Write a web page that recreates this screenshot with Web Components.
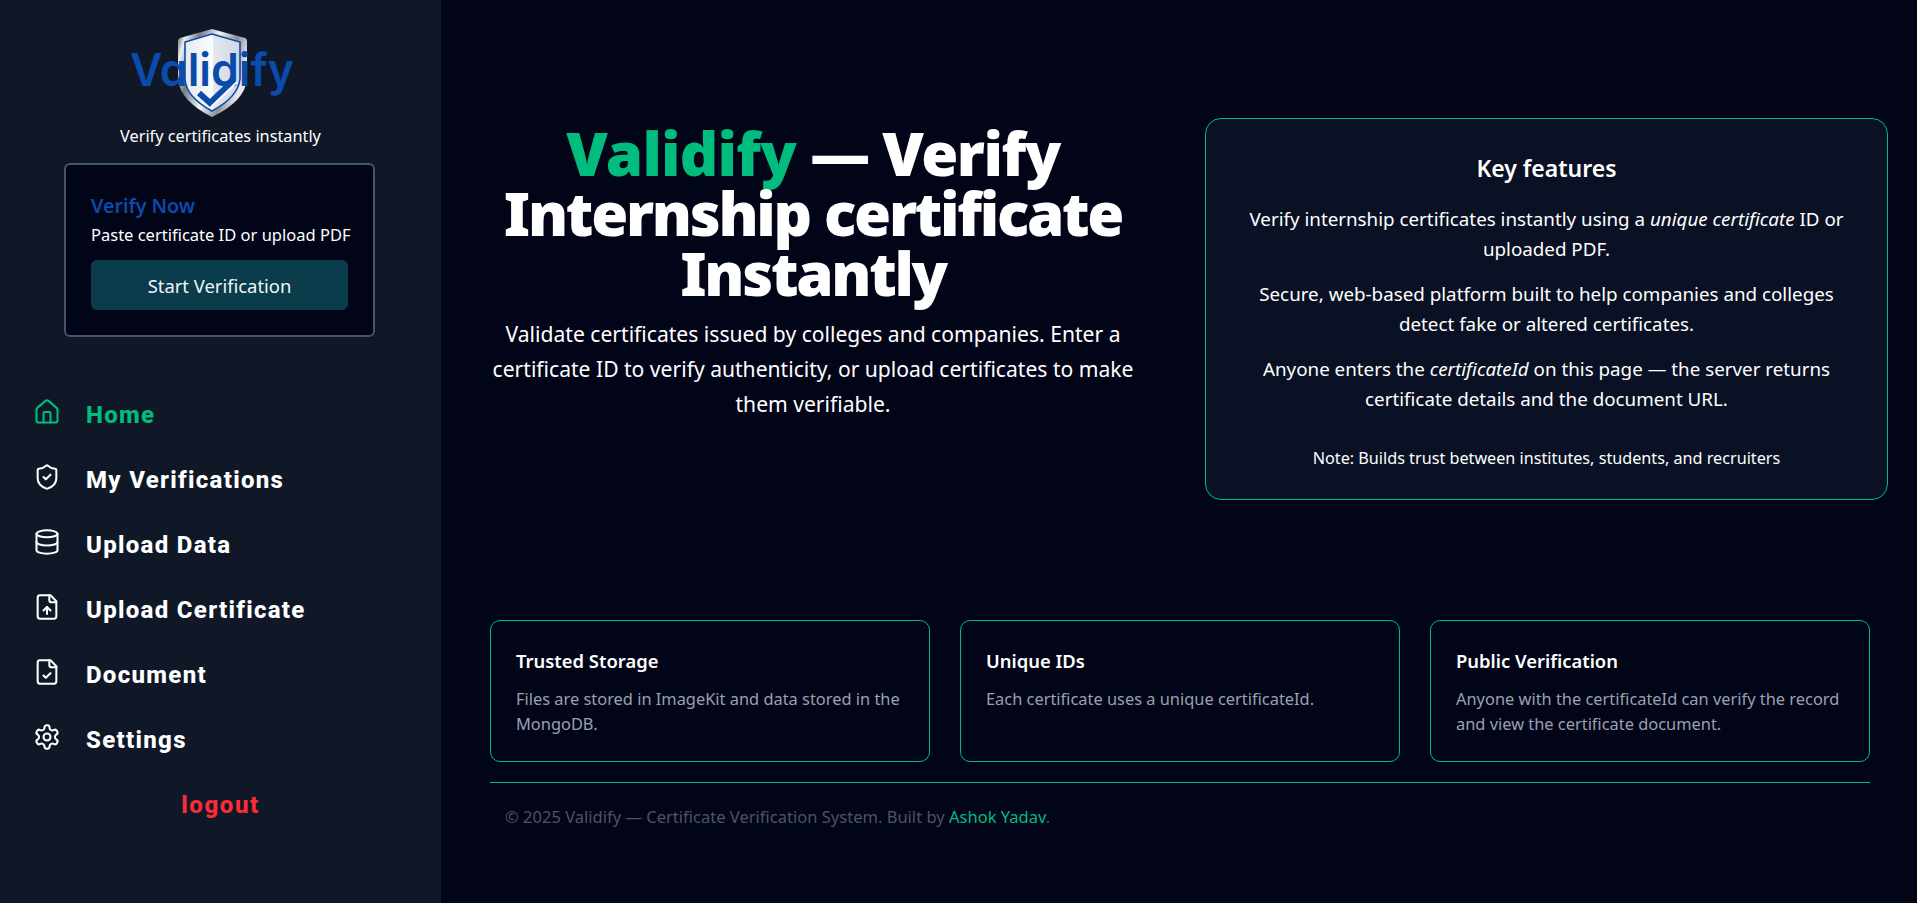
<!DOCTYPE html>
<html lang="en">
<head>
<meta charset="utf-8">
<title>Validify</title>
<style>
    html, body { margin: 0; padding: 0; height: 100%; }
    body { background: #020418; color: #fff; font-family: "Noto Sans", "Open Sans", sans-serif; }
</style>
</head>
<body>
<validify-app>
    <validify-sidebar slot="side">
        <nav-item label="Home" icon="home" active></nav-item>
        <nav-item label="My Verifications" icon="shield"></nav-item>
        <nav-item label="Upload Data" icon="database"></nav-item>
        <nav-item label="Upload Certificate" icon="fileup"></nav-item>
        <nav-item label="Document" icon="filecheck"></nav-item>
        <nav-item label="Settings" icon="settings"></nav-item>
    </validify-sidebar>
    <hero-section>
        <feature-panel slot="panel" heading="Key features">
            <p>Verify internship certificates instantly using a <em>unique certificate</em> ID or uploaded PDF.</p>
            <p>Secure, web-based platform built to help companies and colleges detect fake or altered certificates.</p>
            <p>Anyone enters the <em>certificateId</em> on this page — the server returns certificate details and the document URL.</p>
            <p style="margin-top:29px;font-size:16.2px;margin-bottom:0;">Note: Builds trust between institutes, students, and recruiters</p>
        </feature-panel>
    </hero-section>
    <info-row>
        <info-card heading="Trusted Storage">Files are stored in ImageKit and data stored in the MongoDB.</info-card>
        <info-card heading="Unique IDs">Each certificate uses a unique certificateId.</info-card>
        <info-card heading="Public Verification">Anyone with the certificateId can verify the record and view the certificate document.</info-card>
    </info-row>
    <site-footer></site-footer>
</validify-app>

<script>
const ICONS = {
    home: '<path d="M15 21v-8a1 1 0 0 0-1-1h-4a1 1 0 0 0-1 1v8"/><path d="M3 10a2 2 0 0 1 .709-1.528l7-5.999a2 2 0 0 1 2.582 0l7 5.999A2 2 0 0 1 21 10v9a2 2 0 0 1-2 2H5a2 2 0 0 1-2-2z"/>',
    shield: '<path d="M20 13c0 5-3.5 7.5-7.66 8.95a1 1 0 0 1-.67-.01C7.5 20.5 4 18 4 13V6a1 1 0 0 1 1-1c2 0 4.5-1.2 6.24-2.72a1.17 1.17 0 0 1 1.52 0C14.51 3.81 17 5 19 5a1 1 0 0 1 1 1z"/><path d="m9 12 2 2 4-4"/>',
    database: '<ellipse cx="12" cy="5" rx="9" ry="3"/><path d="M3 5V19A9 3 0 0 0 21 19V5"/><path d="M3 12A9 3 0 0 0 21 12"/>',
    fileup: '<path d="M15 2H6a2 2 0 0 0-2 2v16a2 2 0 0 0 2 2h12a2 2 0 0 0 2-2V7Z"/><path d="M14 2v4a2 2 0 0 0 2 2h4"/><path d="M12 12v6"/><path d="m15 15-3-3-3 3"/>',
    filecheck: '<path d="M15 2H6a2 2 0 0 0-2 2v16a2 2 0 0 0 2 2h12a2 2 0 0 0 2-2V7Z"/><path d="M14 2v4a2 2 0 0 0 2 2h4"/><path d="m9 15 2 2 4-4"/>',
    settings: '<path d="M12.22 2h-.44a2 2 0 0 0-2 2v.18a2 2 0 0 1-1 1.73l-.43.25a2 2 0 0 1-2 0l-.15-.08a2 2 0 0 0-2.73.73l-.22.38a2 2 0 0 0 .73 2.73l.15.1a2 2 0 0 1 1 1.72v.51a2 2 0 0 1-1 1.74l-.15.09a2 2 0 0 0-.73 2.73l.22.38a2 2 0 0 0 2.73.73l.15-.08a2 2 0 0 1 2 0l.43.25a2 2 0 0 1 1 1.73V20a2 2 0 0 0 2 2h.44a2 2 0 0 0 2-2v-.18a2 2 0 0 1 1-1.73l.43-.25a2 2 0 0 1 2 0l.15.08a2 2 0 0 0 2.73-.73l.22-.39a2 2 0 0 0-.73-2.73l-.15-.08a2 2 0 0 1-1-1.74v-.5a2 2 0 0 1 1-1.74l.15-.09a2 2 0 0 0 .73-2.73l-.22-.38a2 2 0 0 0-2.73-.73l-.15.08a2 2 0 0 1-2 0l-.43-.25a2 2 0 0 1-1-1.73V4a2 2 0 0 0-2-2z"/><circle cx="12" cy="12" r="3"/>'
};

class ValidifyApp extends HTMLElement {
    constructor () {
        super();
        this.attachShadow({ mode: 'open' }).innerHTML = `
            <style>
                :host { display: grid; grid-template-columns: 441px 1fr; min-height: 903px; }
                .side { grid-column: 1; }
                main { grid-column: 2; padding: 118px 47px 0 49px; min-width: 0; }
            </style>
            <div class="side"><slot name="side"></slot></div>
            <main><slot></slot></main>
        `;
    }
}

class ValidifySidebar extends HTMLElement {
    constructor () {
        super();
        this.attachShadow({ mode: 'open' }).innerHTML = `
            <style>
                :host { display: block; height: 903px; background: #101828; box-sizing: border-box; padding-top: 27px; }
                .logo { display: block; margin-left: 120px; width: 180px; height: 94px; }
                .tag { margin: 3px 0 0; text-align: center; font-size: 16.3px; line-height: 24px; }
                .card { box-sizing: border-box; width: 311px; height: 174px; margin: 15px 0 0 64px; padding: 24px 25px; background: #020418; border: 2px solid #45556c; border-radius: 6px; }
                h3 { margin: 5px 0 0; color: #0a4bab; font-size: 19.6px; line-height: 24px; font-weight: 600; }
                .card p { margin: 5px 0 0; font-size: 16.5px; line-height: 24px; white-space: nowrap; }
                button { display: block; width: 257px; height: 50px; margin-top: 13px; border: 0; border-radius: 6px; background: #0a3c4c; color: #f1f5f9; font: 18.4px "Noto Sans", sans-serif; }
                nav { margin-top: 45px; padding-left: 33px; display: flex; flex-direction: column; }
                .logout { margin-top: 18px; text-align: center; color: #fb2c36; font: 800 24px/30px Roboto, sans-serif; letter-spacing: 1.6px; }
                text { font-feature-settings: "cv11"; }
            </style>
            <svg class="logo" viewBox="0 0 180 94" aria-label="Validify logo">
                <defs>
                    <linearGradient id="rim" x1="0" y1="0" x2="1" y2="0.35">
                        <stop offset="0" stop-color="#4d5158"/><stop offset=".12" stop-color="#eceef1"/><stop offset=".3" stop-color="#777b82"/><stop offset=".55" stop-color="#f2f3f5"/><stop offset=".8" stop-color="#8b8f96"/><stop offset="1" stop-color="#e6e8eb"/>
                    </linearGradient>
                    <linearGradient id="face" x1="0" y1="0" x2="1" y2="0">
                        <stop offset="0" stop-color="#e4eaf0"/><stop offset=".5" stop-color="#fbfcfd"/><stop offset=".52" stop-color="#e3e8ee"/><stop offset="1" stop-color="#cfd8e2"/>
                    </linearGradient>
                </defs>
                <path d="M92 2 L125 11 Q127 12 127 14 L127 52 Q125 74 92 90 Q60 74 58 52 L58 14 Q58 12 60 11Z" fill="url(#rim)"/>
                <path d="M92 7 L120 15 L120 52 Q118 70 92 84 Q66 70 65 52 L65 15Z" fill="url(#face)" stroke="#0a4bab" stroke-width="1.6"/>
                <text x="92" y="59" text-anchor="middle" textLength="164" lengthAdjust="spacingAndGlyphs" font-family="Inter, sans-serif" font-size="45" font-weight="600" fill="#0a4bab">Validify</text>
                <path d="M79 66 L90 76 L112 55" fill="none" stroke="#0a4bab" stroke-width="6"/>
                <path d="M91 80 L117 55" fill="none" stroke="#fbfcfd" stroke-width="2"/>
            </svg>
            <p class="tag">Verify certificates instantly</p>
            <div class="card">
                <h3>Verify Now</h3>
                <p>Paste certificate ID or upload PDF</p>
                <button>Start Verification</button>
            </div>
            <nav><slot></slot></nav>
            <div class="logout">logout</div>
        `;
    }
}

class NavItem extends HTMLElement {
    constructor () {
        super();
        const icon = ICONS[this.getAttribute('icon')] || '';
        this.attachShadow({ mode: 'open' }).innerHTML = `
            <style>
                :host { display: flex; align-items: center; gap: 25px; height: 65px; color: #fff; }
                :host([active]) { color: #00bc7d; }
                svg { width: 28px; height: 28px; flex: none; margin-top: -6px; fill: none; stroke: currentColor; stroke-width: 1.75; stroke-linecap: round; stroke-linejoin: round; }
                span { font: 800 24px/30px Roboto, sans-serif; letter-spacing: 1.3px; white-space: nowrap; }
            </style>
            <svg viewBox="0 0 24 24">${icon}</svg>
            <span>${this.getAttribute('label')}</span>
        `;
    }
}

class HeroSection extends HTMLElement {
    constructor () {
        super();
        this.attachShadow({ mode: 'open' }).innerHTML = `
            <style>
                :host { display: flex; align-items: flex-start; justify-content: space-between; margin-right: -18px; }
                .intro { width: 646px; text-align: center; }
                h1 { margin: 5px 0 0; font: 900 60px/60px "Noto Sans", sans-serif; letter-spacing: -2.3px; word-spacing: 1px; }
                h1 b { color: #00bc7d; font-weight: inherit; letter-spacing: -0.8px; }
                h1 span { letter-spacing: -1.5px; }
                p { margin: 13px 0 0; font-size: 21.1px; line-height: 35px; }
            </style>
            <div class="intro">
                <h1><b>Validify</b> — <span>Verify</span> Internship certificate Instantly</h1>
                <p>Validate certificates issued by colleges and companies. Enter a certificate ID to verify authenticity, or upload certificates to make them verifiable.</p>
            </div>
            <slot name="panel"></slot>
        `;
    }
}

class FeaturePanel extends HTMLElement {
    constructor () {
        super();
        this.attachShadow({ mode: 'open' }).innerHTML = `
            <style>
                :host { display: block; box-sizing: border-box; width: 683px; height: 382px; padding: 31px 40px; background: #0a1124; border: 1px solid #00bc7d; border-radius: 16px; text-align: center; }
                h2 { margin: 0 0 18px; font-size: 23px; line-height: 36px; font-weight: 600; }
                ::slotted(p) { margin: 0 0 15px; font-size: 18.8px; line-height: 30px; }
            </style>
            <h2>${this.getAttribute('heading')}</h2>
            <slot></slot>
        `;
    }
}

class InfoRow extends HTMLElement {
    constructor () {
        super();
        this.attachShadow({ mode: 'open' }).innerHTML = `
            <style>
                :host { display: grid; grid-template-columns: repeat(3, 1fr); gap: 30px; margin-top: 120px; }
            </style>
            <slot></slot>
        `;
    }
}

class InfoCard extends HTMLElement {
    constructor () {
        super();
        this.attachShadow({ mode: 'open' }).innerHTML = `
            <style>
                :host { display: block; box-sizing: border-box; height: 142px; padding: 26px 25px 0; border: 1px solid #00bc7d; border-radius: 10px; }
                h4 { margin: 0 0 12px; font-size: 18.4px; line-height: 28px; font-weight: 600; }
                p { margin: 0; color: #99a1af; font-size: 16.4px; line-height: 24.5px; }
            </style>
            <h4>${this.getAttribute('heading')}</h4>
            <p><slot></slot></p>
        `;
    }
}

class SiteFooter extends HTMLElement {
    constructor () {
        super();
        this.attachShadow({ mode: 'open' }).innerHTML = `
            <style>
                :host { display: block; margin-top: 20px; padding: 22px 15px 0; border-top: 1px solid #00bc7d; color: #4a5565; font-size: 16.55px; line-height: 24px; }
                a { color: #00bc7d; text-decoration: none; }
            </style>
            © 2025 Validify — Certificate Verification System. Built by <a href="#">Ashok Yadav</a>.
        `;
    }
}

customElements.define('validify-app', ValidifyApp);
customElements.define('validify-sidebar', ValidifySidebar);
customElements.define('nav-item', NavItem);
customElements.define('hero-section', HeroSection);
customElements.define('feature-panel', FeaturePanel);
customElements.define('info-row', InfoRow);
customElements.define('info-card', InfoCard);
customElements.define('site-footer', SiteFooter);
</script>
</body>
</html>
